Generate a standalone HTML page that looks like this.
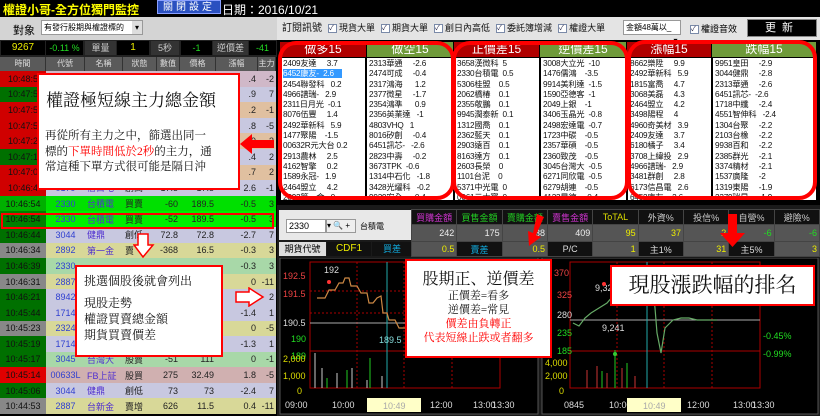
<!DOCTYPE html><html><head><meta charset="utf-8"><style>
*{margin:0;padding:0;box-sizing:border-box}
body{width:820px;height:416px;overflow:hidden;background:#000;font-family:"Liberation Sans","Noto Sans CJK TC",sans-serif;position:relative;font-size:9px}
.a{position:absolute}
.lt{position:absolute;left:0;top:71px;width:276px;border-collapse:collapse;table-layout:fixed}
.lt td{height:15.6px;padding:0 2px;font-size:9px;white-space:nowrap;overflow:hidden;text-align:right;color:#222}
.lt td.t{color:#111;text-align:center}
.lt td.c{color:#3040d0;text-align:center}
.lt td.n{color:#5030d0;text-align:left}
.lt td.s{text-align:left}
.hd{position:absolute;top:57px;height:14px;background:#5a5a5a;color:#ddd;font-size:8px;text-align:center;line-height:14px;border-right:1px solid #333}
.panel{position:absolute;top:58px;height:142px;background:#fff;font-size:8.2px;line-height:10.3px;padding:1px 2px;color:#111;white-space:pre;overflow:hidden;letter-spacing:-0.2px}
.ph{position:absolute;top:42px;height:15px;color:#fff;font-size:12px;text-align:center;line-height:15px}
.r{background:#b00000}.g{background:#6f9a3a}
.ring{position:absolute;border:4px solid #f00;border-radius:18px}
.cb{display:inline-block;width:9px;height:9px;border:1px solid #7a8aa8;background:#fff;vertical-align:middle;margin:0 2px 0 6px;font-size:7px;line-height:7px;color:#224}
.it td{border:1px solid #444;height:15px;text-align:right;padding:0 2px;font-size:9px;white-space:nowrap;overflow:hidden}
</style></head><body>
<div class="a" style="left:0;top:0;width:820px;height:17px;background:#000"></div>
<div class="a" style="left:3px;top:1px;color:#ff0;font-size:12px;font-weight:bold">權證小哥-全方位獨門監控</div>
<div class="a" style="left:157px;top:0;width:64px;height:14px;background:#2a50c0;border:1px solid #8aa0ff;color:#fff;font-size:10px;text-align:center;line-height:13px;letter-spacing:3px">關閉設定</div>
<div class="a" style="left:222px;top:1px;color:#fff;font-size:12px">日期：2016/10/21</div>
<div class="a" style="left:0;top:17px;width:277px;height:23px;background:#d4d4d4"></div>
<div class="a" style="left:13px;top:22px;font-size:11px;color:#000">對象</div>
<div class="a" style="left:41px;top:20px;width:102px;height:15px;background:#fff;border:1px solid #999;font-size:8px;line-height:13px;padding-left:2px">有發行股期與權證標的<span style="float:right;width:10px;background:#ddd;text-align:center">▾</span></div>
<div class="a" style="left:0;top:40px;width:277px;height:17px;background:#222"></div>
<div class="a" style="left:1px;top:41px;width:44px;height:14px;background:#000;color:#ee0;font-size:10px;line-height:14px;text-align:center">9267</div>
<div class="a" style="left:46px;top:41px;width:37px;height:14px;background:#000;color:#2d2;font-size:9px;line-height:14px;text-align:center">-0.11 %</div>
<div class="a" style="left:85px;top:41px;width:31px;height:14px;background:#333;color:#ccc;font-size:9px;line-height:14px;text-align:center">單量</div>
<div class="a" style="left:117px;top:41px;width:32px;height:14px;background:#000;color:#ee0;font-size:10px;line-height:14px;text-align:center">1</div>
<div class="a" style="left:151px;top:41px;width:28px;height:14px;background:#333;color:#ccc;font-size:9px;line-height:14px;text-align:center">5秒</div>
<div class="a" style="left:181px;top:41px;width:31px;height:14px;background:#000;color:#2d2;font-size:9px;line-height:14px;text-align:center">-1</div>
<div class="a" style="left:213px;top:41px;width:35px;height:14px;background:#333;color:#ccc;font-size:9px;line-height:14px;text-align:center">逆價差</div>
<div class="a" style="left:249px;top:41px;width:27px;height:14px;background:#000;color:#2d2;font-size:9px;line-height:14px;text-align:center">-41</div>
<div class="hd" style="left:0;width:46px">時間</div><div class="hd" style="left:46px;width:39px">代號</div><div class="hd" style="left:85px;width:38px">名稱</div><div class="hd" style="left:123px;width:34px">狀態</div><div class="hd" style="left:157px;width:23px">數值</div><div class="hd" style="left:180px;width:36px">價格</div><div class="hd" style="left:216px;width:42px">漲幅</div><div class="hd" style="left:258px;width:18px">主力</div>
<table class="lt"><colgroup><col style="width:46px"><col style="width:39px"><col style="width:38px"><col style="width:34px"><col style="width:23px"><col style="width:36px"><col style="width:42px"><col style="width:18px"></colgroup>
<tr style="background:#d0b8c8"><td class="t" style="background:#d00000">10:48:5</td><td></td><td></td><td></td><td></td><td></td><td>.4</td><td>-2</td></tr>
<tr style="background:#c8c8e0"><td class="t" style="background:#007000">10:47:5</td><td></td><td></td><td></td><td></td><td></td><td>.9</td><td>7</td></tr>
<tr style="background:#e0c0a0"><td class="t" style="background:#d00000">10:47:5</td><td></td><td></td><td></td><td></td><td></td><td>.2</td><td>-1</td></tr>
<tr style="background:#c8c8e0"><td class="t" style="background:#d00000">10:47:5</td><td></td><td></td><td></td><td></td><td></td><td>.8</td><td>-5</td></tr>
<tr style="background:#e0c0a0"><td class="t" style="background:#d00000">10:47:2</td><td></td><td></td><td></td><td></td><td></td><td>.9</td><td>3</td></tr>
<tr style="background:#c8c8e0"><td class="t" style="background:#007000">10:47:1</td><td></td><td></td><td></td><td></td><td></td><td>.4</td><td>2</td></tr>
<tr style="background:#e0c0a0"><td class="t" style="background:#d00000">10:47:0</td><td></td><td></td><td></td><td></td><td></td><td>.7</td><td>2</td></tr>
<tr style="background:#c8c8e0"><td class="t" style="background:#d00000">10:46:4</td><td class="c">0179</td><td class="n">俗目电</td><td class="s">創高</td><td>17.5</td><td>17.5</td><td>2.6</td><td>-1</td></tr>
<tr style="background:#00e000"><td class="t" style="background:#00b000">10:46:54</td><td class="c">2330</td><td class="n">台積電</td><td class="s">買賣</td><td>-60</td><td>189.5</td><td>-0.5</td><td>3</td></tr>
<tr style="background:#00f000"><td class="t" style="background:#008000">10:46:54</td><td class="c">2330</td><td class="n">台積電</td><td class="s">買賣</td><td>-52</td><td>189.5</td><td>-0.5</td><td>3</td></tr>
<tr style="background:#c8c8e0"><td class="t" style="background:#007000">10:46:44</td><td class="c">3044</td><td class="n">健鼎</td><td class="s">創低</td><td>72.8</td><td>72.8</td><td>-2.7</td><td>7</td></tr>
<tr style="background:#d8d898"><td class="t" style="background:#888">10:46:34</td><td class="c">2892</td><td class="n">第一金</td><td class="s">賣</td><td>-368</td><td>16.5</td><td>-0.3</td><td>3</td></tr>
<tr style="background:#a8d8a8"><td class="t" style="background:#007000">10:46:39</td><td class="c">2330</td><td></td><td></td><td></td><td></td><td>-0.3</td><td>3</td></tr>
<tr style="background:#d8d898"><td class="t" style="background:#888">10:46:31</td><td class="c">2887</td><td></td><td></td><td></td><td></td><td>0</td><td>-11</td></tr>
<tr style="background:#c8c8e0"><td class="t" style="background:#007000">10:46:21</td><td class="c">8942</td><td></td><td></td><td></td><td></td><td></td><td>2</td></tr>
<tr style="background:#c8c8e0"><td class="t" style="background:#007000">10:45:44</td><td class="c">1714</td><td></td><td></td><td></td><td></td><td>-1.4</td><td>1</td></tr>
<tr style="background:#d8d898"><td class="t" style="background:#888">10:45:23</td><td class="c">2324</td><td></td><td></td><td></td><td></td><td>0</td><td>-5</td></tr>
<tr style="background:#c8c8e0"><td class="t" style="background:#007000">10:45:19</td><td class="c">1714</td><td></td><td></td><td></td><td></td><td>-1.3</td><td>1</td></tr>
<tr style="background:#a8d8a8"><td class="t" style="background:#007000">10:45:17</td><td class="c">3045</td><td class="n">台灣大</td><td class="s">股賣</td><td>-51</td><td>111</td><td>0</td><td>-1</td></tr>
<tr style="background:#d0b0b0"><td class="t" style="background:#e00000">10:45:14</td><td class="c">00633L</td><td class="n">FB上証</td><td class="s">股買</td><td>275</td><td>32.49</td><td>1.8</td><td>-5</td></tr>
<tr style="background:#c8c8e0"><td class="t" style="background:#007000">10:45:06</td><td class="c">3044</td><td class="n">健鼎</td><td class="s">創低</td><td>73</td><td>73</td><td>-2.4</td><td>7</td></tr>
<tr style="background:#d8d898"><td class="t" style="background:#888">10:44:53</td><td class="c">2887</td><td class="n">台新金</td><td class="s">賣增</td><td>626</td><td>11.5</td><td>0.4</td><td>-11</td></tr>
</table>
<div class="a" style="left:1px;top:213px;width:273px;height:16px;border:2px solid #f00"></div>
<div class="a" style="left:37px;top:73px;width:203px;height:117px;background:#fff;border:2px solid #f00"></div>
<div class="a" style="left:46px;top:86px;font-size:17px;color:#111;font-family:'Liberation Serif','Noto Serif CJK SC',serif">權證極短線主力總金額</div>
<div class="a" style="left:45px;top:129px;width:190px;font-size:11.5px;line-height:15.5px;color:#111;font-family:'Liberation Serif','Noto Serif CJK SC',serif">再從所有主力之中，篩選出同一<br>標的<span style="color:#f00">下單時間低於2秒</span>的主力，通<br>常這種下單方式很可能是隔日沖</div>
<svg class="a" style="left:238px;top:131px" width="40" height="26"><polygon points="2,13 14,3 14,9 36,9 36,17 14,17 14,23" fill="#f00"/></svg>
<svg class="a" style="left:133px;top:233px" width="22" height="26"><polygon points="5,1 15,1 15,12 20,12 10,24 1,12 5,12" fill="#fff" stroke="#f00" stroke-width="1.5"/></svg>
<div class="a" style="left:75px;top:265px;width:148px;height:92px;background:#fff;border:2px solid #f00"></div>
<div class="a" style="left:84px;top:273px;font-size:12px;line-height:16px;color:#111;font-family:'Liberation Serif','Noto Serif CJK SC',serif">挑選個股後就會列出<div style="height:6px"></div>現股走勢<br>權證買賣總金額<br>期貨買賣價差</div>
<svg class="a" style="left:235px;top:287px" width="30" height="20"><polygon points="1,5 14,5 14,1 28,10 14,19 14,15 1,15" fill="#fff" stroke="#f00" stroke-width="1.5"/></svg>

<div class="a" style="left:277px;top:17px;width:543px;height:23px;background:#e4e4e4;font-size:9px;line-height:23px;color:#111;white-space:nowrap;padding-left:5px"><span style="font-size:10px">訂閱訊號</span><span class="cb">✓</span>現貨大單<span class="cb">✓</span>期貨大單<span class="cb">✓</span>創日內高低<span class="cb">✓</span>委託簿增減<span class="cb">✓</span>權證大單</div>
<div class="a" style="left:623px;top:20px;width:58px;height:15px;background:#fff;border:1px solid #999;font-size:8px;line-height:13px;padding-left:2px">金額48萬以_<span style="float:right;width:9px;text-align:center">▾</span></div>
<div class="a" style="left:690px;top:22px;font-size:9px"><span class="cb" style="margin-left:0">✓</span>權證音效</div>
<div class="a" style="left:747px;top:19px;width:70px;height:18px;background:#000;border:1px solid #888;color:#fff;font-size:11px;text-align:center;line-height:16px;letter-spacing:6px">更新</div>
<div class="ph r" style="left:280px;width:86px">做多15</div><div class="ph g" style="left:367px;width:86px">做空15</div>
<div class="ph r" style="left:454px;width:85px">正價差15</div><div class="ph g" style="left:540px;width:86px">逆價差15</div>
<div class="ph r" style="left:627px;width:84px">漲幅15</div><div class="ph g" style="left:712px;width:104px">跌幅15</div>
<div class="panel" style="left:281px;width:84px">2409友達     3.7
<span style="background:#39f;color:#fff">6452康友-  2.6    </span>
2454聯發科   0.2
4966譜瑞-   2.9
2311日月光  -0.1
8076伍豐     1.4
2492華新科   5.9
1477聚陽    -1.5
00632R元大台 0.2
2913農林     2.5
4162智擎     0.2
1589永冠-   1.9
2464盟立     4.2
2892第一金   0
3514昱晶    -0.8</div>
<div class="panel" style="left:367px;width:86px">2313華通     -2.6
2474可成     -0.4
2317鴻海      1.2
2377微星     -1.7
2354鴻準      0.9
2356英業達   -1
4803VHQ   1
8016矽創     -0.4
6451訊芯-   -2.6
2823中壽     -0.2
3673TPK  -0.6
1314中石化   -1.8
3428光燿科   -0.2
9939宏全      0.4
3691碩禾     -1.9</div>
<div class="panel" style="left:455px;width:84px">3658漢微科  5
2330台積電  0.5
5306桂盟    0.5
2062橋椿    0.1
2355敬鵬    0.1
9945潤泰新  0.1
1312國喬    0.1
2362藍天    0.1
2903遠百    0.1
8163達方    0.1
2603長榮    0
1101台泥    0
5371中光電  0
0061元大寶  0
3016彩晶    0</div>
<div class="panel" style="left:541px;width:85px">3008大立光  -10
1476儒鴻    -3.5
9914美利達  -1.5
1590亞德客  -1
2049上銀    -1
3406玉晶光  -0.8
2498宏達電  -0.7
1723中碳    -0.5
2357華碩    -0.5
2360致茂    -0.5
3045台灣大  -0.5
6271同欣電  -0.5
6279胡連    -0.5
4123晟德    -0.4
5347世界    -0.4</div>
<div class="panel" style="left:628px;width:83px">8662樂陞     9.9
2492華新科   5.9
1815富喬     4.7
3068美磊     4.3
2464盟立     4.2
3498陽程     4
4960奇美材   3.9
2409友達     3.7
6180橘子     3.4
3708上緯投   2.9
4966譜瑞-   2.9
3481群創     2.8
6173信昌電   2.6
6452康友-   2.6
2913農林     2.5</div>
<div class="panel" style="left:713px;width:103px">9951皇田     -2.9
3044健鼎     -2.8
2313華通     -2.6
6451訊芯-  -2.6
1718中纖     -2.4
4551智伸科   -2.4
1304台聚     -2.2
2103台橡     -2.2
9938百和     -2.2
2385群光     -2.1
3374精材     -2.1
1537廣隆     -2
1319東陽     -1.9
2379瑞昱     -1.9
3265台星科   -1.9</div>
<div class="ring" style="left:278px;top:41px;width:177px;height:159px"></div>
<div class="ring" style="left:452px;top:41px;width:177px;height:159px"></div>
<div class="ring" style="left:627px;top:40px;width:190px;height:160px"></div>
<div class="a" style="left:277px;top:205px;width:543px;height:211px;background:#1a1a1a"></div>
<div class="a" style="left:279px;top:210px;width:133px;height:30px;background:#e8e8e8"></div>
<div class="a" style="left:286px;top:219px;width:40px;height:14px;background:#fff;border:1px solid #999;font-size:9px;line-height:12px;padding-left:2px">2330</div>
<div class="a" style="left:326px;top:219px;width:30px;height:14px;background:#eee;border:1px solid #999;font-size:8px;line-height:12px">▾ 🔍 +</div>
<div class="a" style="left:360px;top:221px;font-size:8px">台積電</div>
<div class="a" style="left:279px;top:242px;width:47px;height:14px;background:#ddd;font-size:9px;line-height:14px;text-align:center">期貨代號</div>
<div class="a" style="left:327px;top:242px;width:44px;height:14px;background:#111;color:#ee0;font-size:10px;line-height:14px;text-align:center">CDF1</div>
<div class="a" style="left:372px;top:242px;width:40px;height:14px;background:#111;color:#1ad;font-size:9px;line-height:14px;text-align:center">買差</div>
<table class="it a" style="left:411px;top:209px;border-collapse:collapse;width:409px;table-layout:fixed">
<tr style="background:#111"><td style="color:#c3c;text-align:center">買購金額</td><td style="color:#2c2;text-align:center">買售金額</td><td style="color:#2c2;text-align:center">賣購金額</td><td style="color:#c3c;text-align:center">賣售金額</td><td style="color:#dd0;text-align:center">ToTAL</td><td style="color:#ccc;text-align:center">外資%</td><td style="color:#ccc;text-align:center">投信%</td><td style="color:#ccc;text-align:center">自營%</td><td style="color:#ccc;text-align:center">避險%</td></tr>
<tr style="background:#555;color:#eee;height:17px"><td>242</td><td>175</td><td>38</td><td>409</td><td style="color:#ee0">95</td><td style="color:#ee0">37</td><td style="color:#ee0">2</td><td style="color:#2d2">-6</td><td style="color:#2d2">-6</td></tr>
<tr><td style="background:#555;color:#ee0">0.5</td><td style="background:#111;color:#1ad;text-align:center">賣差</td><td style="background:#555;color:#ee0">0.5</td><td style="background:#111;color:#ddd;text-align:center">P/C</td><td style="background:#555;color:#ee0">1</td><td style="background:#111;color:#ddd;text-align:center">主1%</td><td style="background:#555;color:#ee0">31</td><td style="background:#111;color:#ddd;text-align:center">主5%</td><td style="background:#555;color:#ee0">3</td></tr>
</table>
<svg class="a" style="left:277px;top:258px" width="543" height="158">
<rect x="3" y="0" width="258" height="156" fill="#000" stroke="#555"/>
<rect x="265" y="0" width="276" height="156" fill="#000" stroke="#555"/>
<g stroke="#a00" fill="none"><rect x="33" y="4" width="190" height="126"/><line x1="33" y1="93" x2="223" y2="93"/>
<line x1="80" y1="4" x2="80" y2="130" stroke-dasharray="2,2"/><line x1="127" y1="4" x2="127" y2="130" stroke-dasharray="2,2"/><line x1="175" y1="4" x2="175" y2="130" stroke-dasharray="2,2"/>
<line x1="33" y1="33" x2="223" y2="33" stroke-dasharray="2,2"/><line x1="33" y1="55" x2="223" y2="55" stroke-dasharray="2,2"/>
<rect x="293" y="4" width="190" height="126"/><line x1="293" y1="93" x2="483" y2="93"/>
<line x1="340" y1="4" x2="340" y2="130" stroke-dasharray="2,2"/><line x1="387" y1="4" x2="387" y2="130" stroke-dasharray="2,2"/><line x1="435" y1="4" x2="435" y2="130" stroke-dasharray="2,2"/></g>
<line x1="33" y1="65" x2="223" y2="65" stroke="#aaa"/><line x1="293" y1="62" x2="483" y2="62" stroke="#aaa"/>
<line x1="110" y1="4" x2="110" y2="130" stroke="#2aa"/><line x1="370" y1="4" x2="370" y2="130" stroke="#2aa"/>
<polyline points="40,40 48,40 52,32 58,32 62,25 66,25 68,20 72,20 74,28 80,28 84,35 90,35 92,45 96,45 100,40 104,38 106,55 110,55 112,62 118,62 122,70 130,70 140,70 146,65 150,72 155,75 158,88" fill="none" stroke="#c84" stroke-width="1.2"/>
<polyline points="296,65 302,68 308,60 314,55 322,50 330,45 336,38 344,30 352,28 360,24 366,20 372,22 376,30 378,50 380,75 384,95 388,70 396,62 404,60 412,60 420,62 440,62" fill="none" stroke="#6a6" stroke-width="1.2"/>
<g stroke="#ccc"><line x1="38" y1="130" x2="38" y2="95"/><line x1="45" y1="130" x2="45" y2="110"/><line x1="60" y1="130" x2="60" y2="115"/><line x1="75" y1="130" x2="75" y2="110"/><line x1="90" y1="130" x2="90" y2="122"/><line x1="105" y1="130" x2="105" y2="118"/></g>
<g stroke="#2c2"><line x1="93" y1="130" x2="93" y2="100"/><line x1="70" y1="130" x2="70" y2="112"/><line x1="50" y1="130" x2="50" y2="120"/></g>
<g stroke="#c33"><line x1="310" y1="130" x2="310" y2="112"/><line x1="320" y1="130" x2="320" y2="108"/><line x1="330" y1="130" x2="330" y2="115"/><line x1="345" y1="130" x2="345" y2="110"/><line x1="358" y1="130" x2="358" y2="118"/></g>
<g stroke="#2c2"><line x1="338" y1="130" x2="338" y2="92"/><line x1="325" y1="130" x2="325" y2="113"/><line x1="350" y1="130" x2="350" y2="105"/></g>
<g font-family="Liberation Sans" font-size="9"><text x="6" y="21" fill="#e44">192.5</text><text x="6" y="39" fill="#e44">191.5</text><text x="6" y="68" fill="#ddd">190.5</text><text x="14" y="84" fill="#2d2">190</text><text x="14" y="101" fill="#2d2">189</text>
<text x="6" y="104" fill="#dd0">2,000</text><text x="6" y="121" fill="#dd0">1,000</text><text x="20" y="136" fill="#dd0">0</text>
<text x="47" y="15" fill="#ddd">192</text><text x="102" y="85" fill="#8dd">189.5</text>
<text x="8" y="150" fill="#ddd">09:00</text><text x="55" y="150" fill="#ddd">10:00</text><text x="153" y="150" fill="#ddd">12:00</text><text x="196" y="150" fill="#ddd">13:00</text><text x="215" y="150" fill="#ddd">13:30</text>
<text x="318" y="33" fill="#ddd">9,32</text><text x="325" y="73" fill="#ddd">9,241</text>
<text x="277" y="18" fill="#e44">370</text><text x="280" y="40" fill="#e44">325</text><text x="280" y="60" fill="#ddd">280</text><text x="280" y="78" fill="#2d2">235</text><text x="280" y="96" fill="#2d2">185</text>
<text x="486" y="81" fill="#2d2">-0.45%</text><text x="486" y="99" fill="#2d2">-0.99%</text>
<text x="268" y="108" fill="#dd0">4,000</text><text x="268" y="121" fill="#dd0">2,000</text><text x="282" y="136" fill="#dd0">0</text>
<text x="287" y="150" fill="#ddd">0845</text><text x="332" y="150" fill="#ddd">10:00</text><text x="410" y="150" fill="#ddd">12:00</text><text x="456" y="150" fill="#ddd">13:00</text><text x="475" y="150" fill="#ddd">13:30</text></g>
<rect x="90" y="140" width="54" height="14" fill="#ffffc8"/><text x="106" y="151" font-size="9" fill="#aaa" font-family="Liberation Sans">10:49</text>
<rect x="350" y="140" width="54" height="14" fill="#ffffc8"/><text x="366" y="151" font-size="9" fill="#aaa" font-family="Liberation Sans">10:49</text>
<circle cx="52" cy="24" r="2" fill="#f33"/><circle cx="158" cy="89" r="2" fill="#3c3"/><circle cx="327" cy="26" r="2" fill="#f33"/><circle cx="338" cy="96" r="2" fill="#3c3"/>
</svg>
<div class="a" style="left:405px;top:259px;width:147px;height:99px;background:#fff;border:2px solid #f00;text-align:center;font-family:'Liberation Serif','Noto Serif CJK SC',serif;color:#111"><div style="font-size:16px;margin-top:5px">股期正、逆價差</div><div style="font-size:11px;line-height:14px">正價差=看多<br>逆價差=常見<br><span style="color:#f00">價差由負轉正<br>代表短線止跌或者翻多</span></div></div>
<div class="a" style="left:610px;top:265px;width:205px;height:41px;background:#fff;border:2px solid #f00;font-size:21px;line-height:37px;text-align:center;color:#111;font-family:'Liberation Serif','Noto Serif CJK SC',serif">現股漲跌幅的排名</div>
<svg class="a" style="left:525px;top:213px" width="22" height="34"><polygon points="12,1 19,4 11,22 16,24 4,33 3,18 8,20" fill="#f00"/></svg>
<svg class="a" style="left:718px;top:213px" width="30" height="36"><polygon points="10,1 19,1 19,20 27,20 14.5,34 2,20 10,20" fill="#f00"/></svg>
</body></html>
